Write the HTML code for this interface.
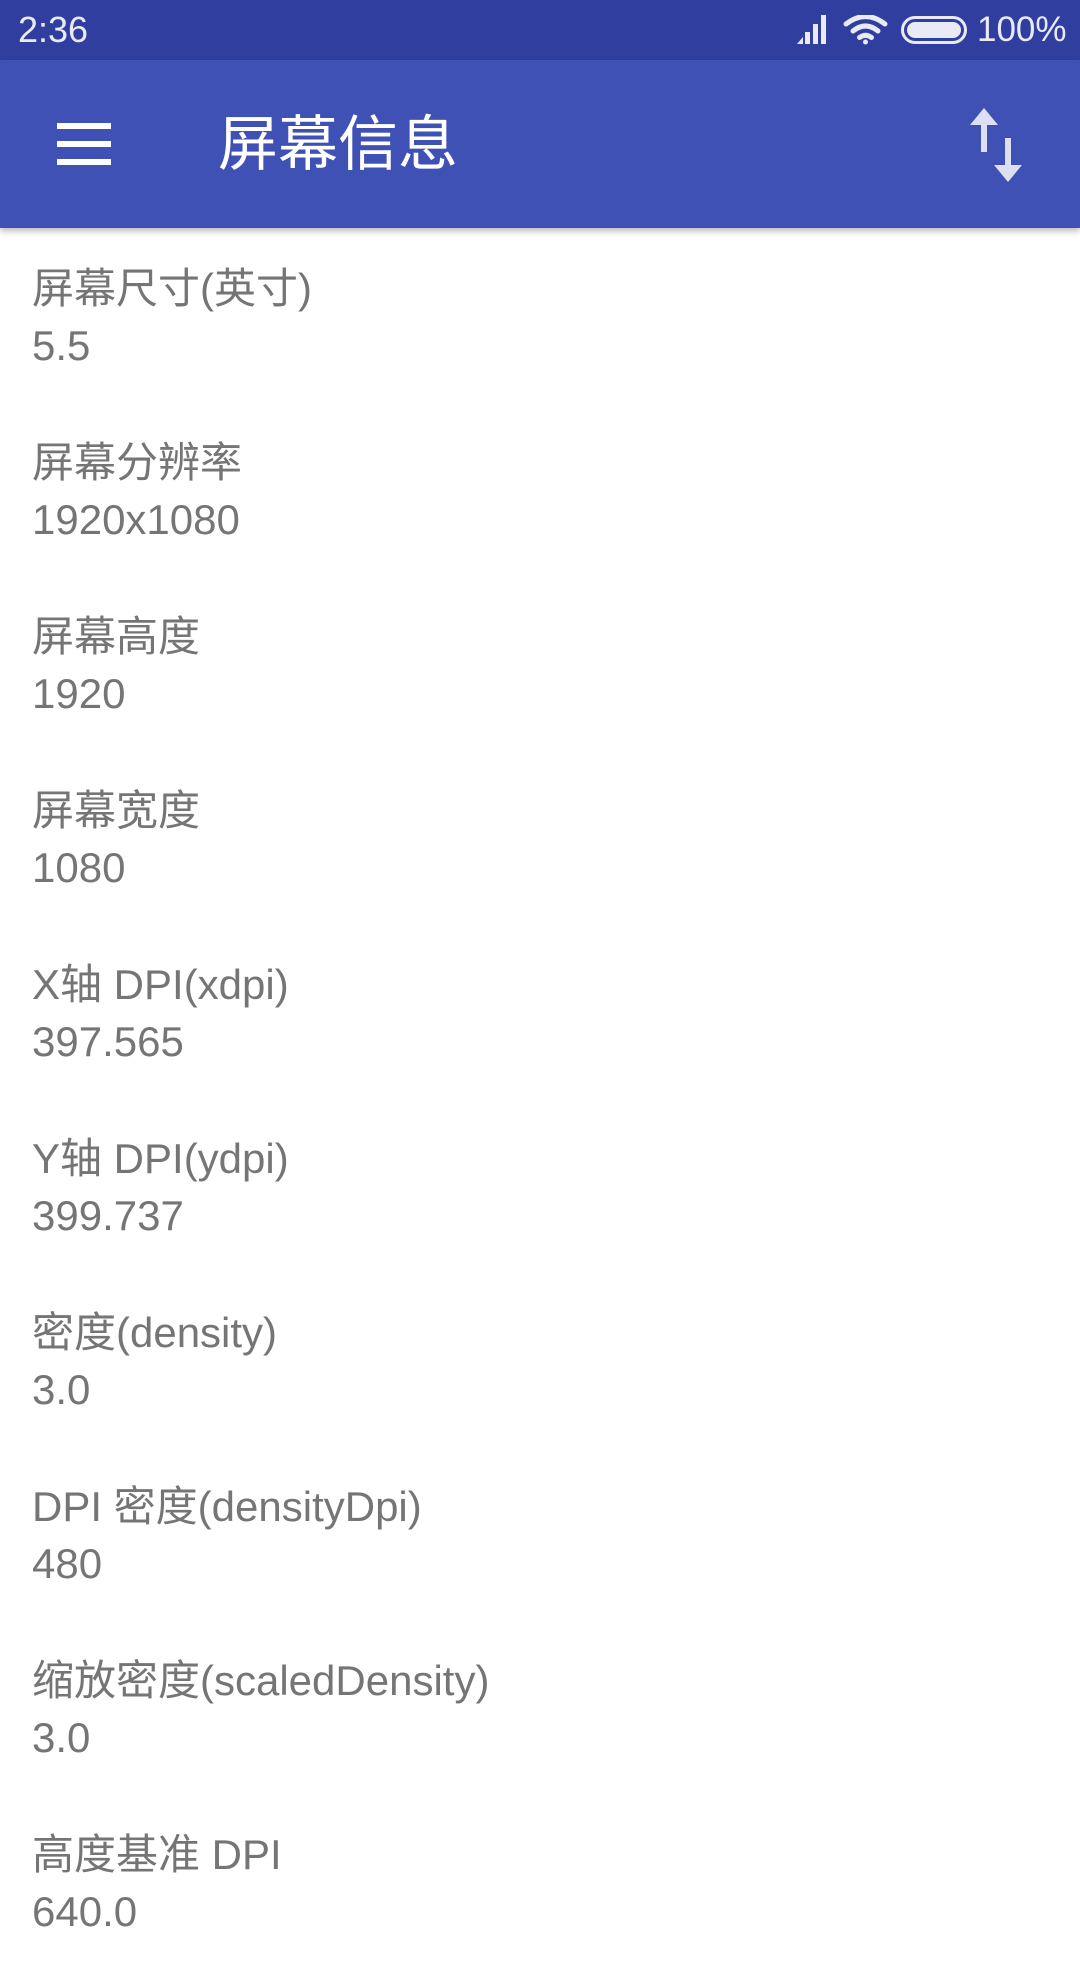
<!DOCTYPE html>
<html><head><meta charset="utf-8"><style>
*{margin:0;padding:0;box-sizing:border-box}
body{width:1080px;height:1920px;overflow:hidden;background:#fff;font-family:"Liberation Sans","Noto Sans CJK SC",sans-serif;position:relative}
.sb{position:absolute;left:0;top:0;width:1080px;height:60px;background:#303F9F;color:#E8EAF6}
.tb{position:absolute;left:0;top:60px;width:1080px;height:168px;background:#3F51B5;box-shadow:0 3px 6px rgba(0,0,0,.28);z-index:2}
.list{position:absolute;left:0;top:228px;width:1080px}
.it{height:174px;padding:32px 0 0 32px;color:#757575;font-size:42px}
.it div{line-height:57px;height:57px;white-space:nowrap}
</style></head><body>
<div class="sb">
<div style="position:absolute;left:18px;top:10px;font-size:36px;line-height:40px">2:36</div>
<svg style="position:absolute;left:797px;top:15px" width="31" height="29" viewBox="0 0 31 29" fill="#E8EAF6"><path d="M0 29 L6 22 V29Z"/><rect x="8" y="17" width="5" height="12"/><rect x="16" y="9" width="5" height="20"/><rect x="24" y="0" width="5" height="29"/></svg>
<svg style="position:absolute;left:843px;top:15px" width="45" height="30" viewBox="0 0 45 30" fill="none" stroke="#E8EAF6" stroke-width="5" stroke-linecap="round"><path d="M3 9 Q22.5 -6 42 9"/><path d="M10 16 Q22.5 6 35 16"/><path d="M16.5 22.5 Q22.5 18 28.5 22.5"/><circle cx="22.5" cy="27" r="2.5" fill="#E8EAF6" stroke="none"/></svg>
<svg style="position:absolute;left:901px;top:16px" width="66" height="28" viewBox="0 0 66 28"><rect x="1.5" y="1.5" width="63" height="25" rx="12.5" fill="none" stroke="#E8EAF6" stroke-width="3"/><rect x="6" y="6" width="54" height="16" rx="8" fill="#E8EAF6"/></svg>
<div style="position:absolute;left:977px;top:10px;font-size:35px;line-height:40px">100%</div>
</div>
<div class="tb">
<div style="position:absolute;left:57px;top:63px;width:54px;height:6px;background:#fff"></div>
<div style="position:absolute;left:57px;top:81px;width:54px;height:6px;background:#fff"></div>
<div style="position:absolute;left:57px;top:99px;width:54px;height:6px;background:#fff"></div>
<div style="position:absolute;left:218px;top:50px;font-size:60px;line-height:70px;color:#fff">屏幕信息</div>
<svg style="position:absolute;left:966px;top:48px" width="60" height="74" viewBox="0 0 60 74" fill="#DDE0F2"><path d="M18 0 L32 17 H21 V44 H15 V17 H4Z"/><path d="M42 74 L56 57 H45 V30 H39 V57 H28Z"/></svg>
</div>
<div class="list">
<div class="it"><div>屏幕尺寸(英寸)</div><div>5.5</div></div>
<div class="it"><div>屏幕分辨率</div><div>1920x1080</div></div>
<div class="it"><div>屏幕高度</div><div>1920</div></div>
<div class="it"><div>屏幕宽度</div><div>1080</div></div>
<div class="it"><div>X轴 DPI(xdpi)</div><div>397.565</div></div>
<div class="it"><div>Y轴 DPI(ydpi)</div><div>399.737</div></div>
<div class="it"><div>密度(density)</div><div>3.0</div></div>
<div class="it"><div>DPI 密度(densityDpi)</div><div>480</div></div>
<div class="it"><div>缩放密度(scaledDensity)</div><div>3.0</div></div>
<div class="it"><div>高度基准 DPI</div><div>640.0</div></div>
</div>
</body></html>
